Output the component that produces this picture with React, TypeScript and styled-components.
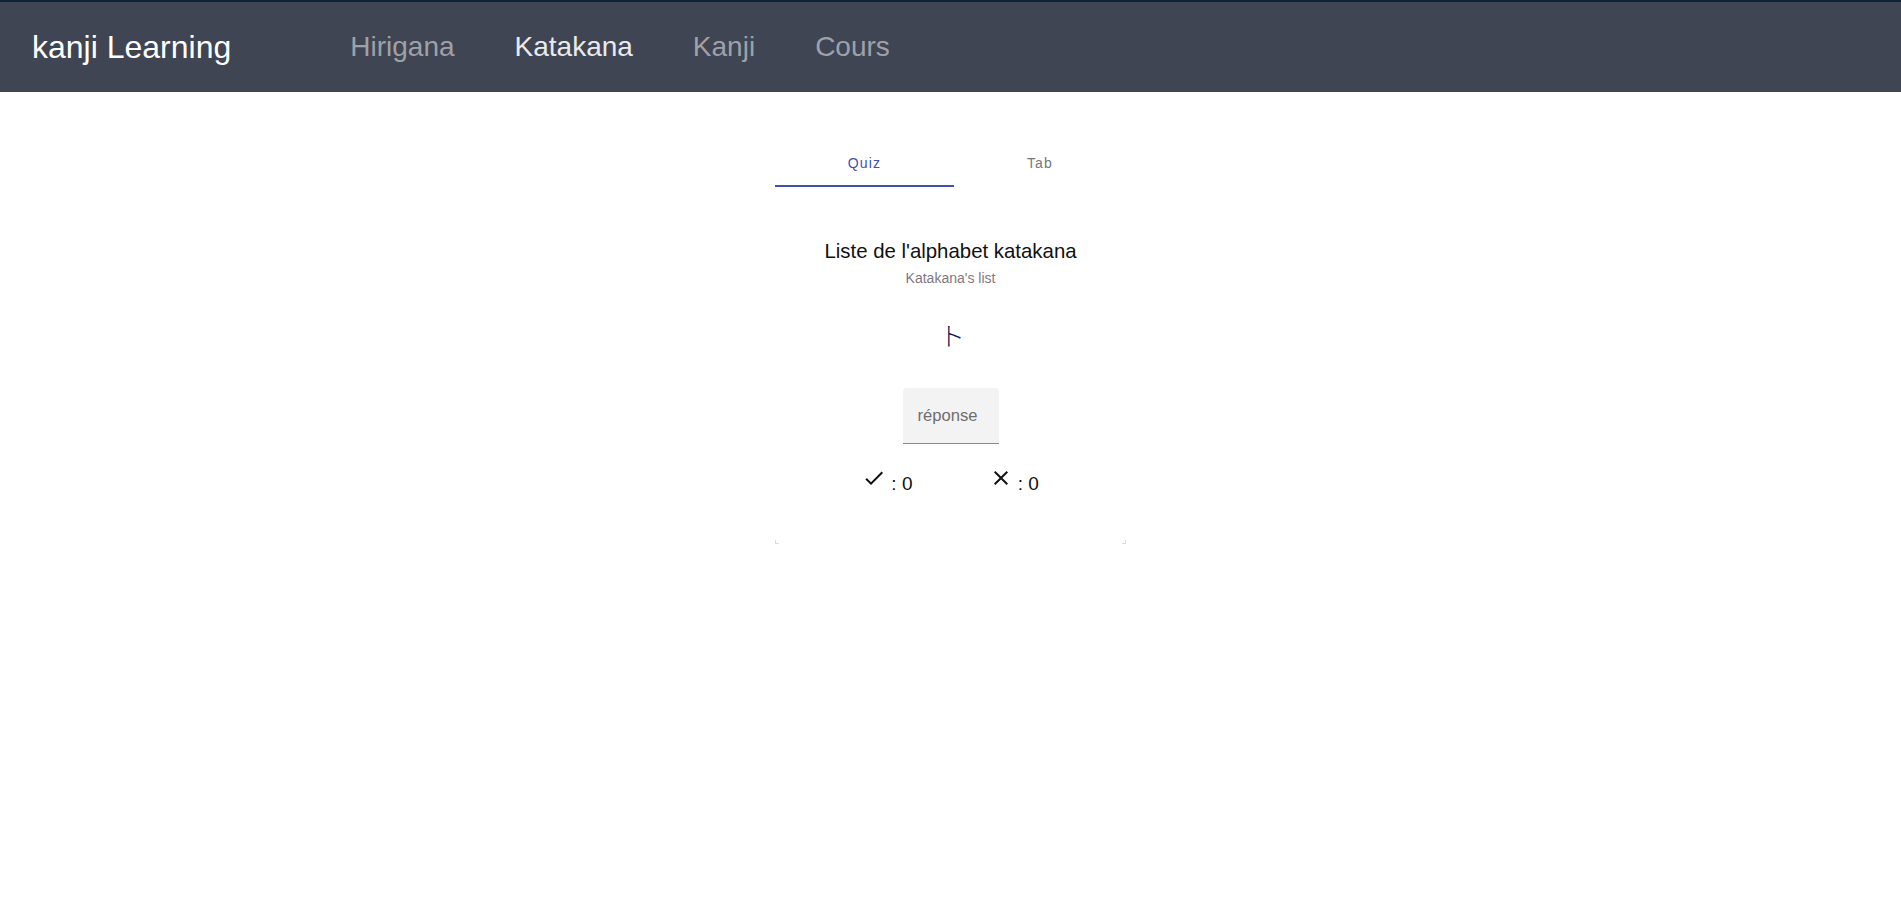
import React, { useState } from "react";
import styled, { createGlobalStyle } from "styled-components";

const GlobalStyle = createGlobalStyle`
  html, body {
    margin: 0;
    padding: 0;
    background: #ffffff;
    font-family: "Liberation Sans", Arial, sans-serif;
  }
  * { box-sizing: border-box; }
`;

const NavBar = styled.nav`
  display: flex;
  align-items: flex-start;
  height: 92px;
  padding: 25px 0 25px 32px;
  background: #3f4552;
  border-top: 2px solid #0e2235;
`;

const Brand = styled.a`
  font-size: 32px;
  line-height: 40px;
  color: #ffffff;
  text-decoration: none;
  margin-right: 89px;
  white-space: nowrap;
`;

const NavLinks = styled.div`
  display: flex;
`;

const NavLink = styled.a<{ $active?: boolean }>`
  font-size: 28px;
  line-height: 40px;
  padding: 0 30px;
  color: ${(p) => (p.$active ? "#e9eaec" : "#9ea1a8")};
  text-decoration: none;
  white-space: nowrap;
  cursor: pointer;
`;

const Main = styled.main`
  display: flex;
  flex-direction: column;
  align-items: center;
`;

const Card = styled.section`
  position: relative;
  width: 351px;
  margin-top: 47px;
  padding-bottom: 48px;
  display: flex;
  flex-direction: column;
  align-items: center;

  &::before,
  &::after {
    content: "";
    position: absolute;
    bottom: 0;
    width: 3px;
    height: 3px;
    border-bottom: 1px solid #dcdcdc;
  }
  &::before {
    left: 0;
    border-left: 1px solid #dcdcdc;
  }
  &::after {
    right: 0;
    border-right: 1px solid #dcdcdc;
  }
`;

const TabList = styled.div`
  display: grid;
  grid-template-columns: 179px 172px;
  width: 100%;
`;

const TabButton = styled.button<{ $active?: boolean }>`
  height: 48px;
  border: none;
  background: transparent;
  font-family: "Liberation Sans", Arial, sans-serif;
  font-weight: 400;
  font-size: 14px;
  letter-spacing: 1.2px;
  color: ${(p) => (p.$active ? "#3f51b5" : "#767676")};
  border-bottom: 2px solid ${(p) => (p.$active ? "#3f51b5" : "transparent")};
  padding: 2px 0 0 0;
  cursor: pointer;
`;

const Title = styled.h2`
  margin: 52px 0 0 0;
  font-size: 20.4px;
  line-height: 24px;
  font-weight: 400;
  color: #111111;
`;

const Subtitle = styled.p`
  margin: 5px 0 0 0;
  font-size: 14px;
  line-height: 20px;
  color: #81787f;
`;

const Kana = styled.div`
  margin-top: 32px;
  padding-left: 3px;
  font-family: "Noto Sans CJK JP", "Noto Sans CJK SC", sans-serif;
  font-weight: 300;
  font-size: 26px;
  line-height: 30px;
  color: #10175a;
`;

const AnswerInput = styled.input`
  margin-top: 38px;
  width: 96px;
  height: 56px;
  padding: 0 0 0 15px;
  border: none;
  border-bottom: 1px solid #8c8c8c;
  border-radius: 4px 4px 0 0;
  background: #f3f3f3;
  font-family: "Liberation Sans", Arial, sans-serif;
  font-size: 16.6px;
  color: #222;
  outline: none;

  &::placeholder {
    color: #6e6e6e;
  }
`;

const ScoreRow = styled.div`
  display: flex;
  gap: 76px;
  margin-top: 22px;
`;

const ScoreItem = styled.div`
  display: flex;
  align-items: baseline;
  font-size: 19px;
  line-height: 24px;
  color: #111111;
  white-space: pre;
`;

const Icon = styled.svg`
  width: 24px;
  height: 24px;
  fill: #111111;
  flex: none;
`;

const CheckIcon = () => (
  <Icon viewBox="0 0 24 24">
    <path d="M9 16.17L4.83 12l-1.42 1.41L9 19 21 7l-1.41-1.41z" />
  </Icon>
);

const CloseIcon = () => (
  <Icon viewBox="0 0 24 24">
    <path d="M19 6.41L17.59 5 12 10.59 6.41 5 5 6.41 10.59 12 5 17.59 6.41 19 12 13.41 17.59 19 19 17.59 13.41 12z" />
  </Icon>
);

export default function App() {
  const [tab, setTab] = useState(0);
  const [answer, setAnswer] = useState("");
  const links = ["Hirigana", "Katakana", "Kanji", "Cours"];
  return (
    <>
      <GlobalStyle />
      <NavBar>
        <Brand>kanji Learning</Brand>
        <NavLinks>
          {links.map((l) => (
            <NavLink key={l} $active={l === "Katakana"}>
              {l}
            </NavLink>
          ))}
        </NavLinks>
      </NavBar>
      <Main>
        <Card>
          <TabList>
            <TabButton $active={tab === 0} onClick={() => setTab(0)}>
              Quiz
            </TabButton>
            <TabButton $active={tab === 1} onClick={() => setTab(1)}>
              Tab
            </TabButton>
          </TabList>
          <Title>Liste de l'alphabet katakana</Title>
          <Subtitle>Katakana's list</Subtitle>
          <Kana>ト</Kana>
          <AnswerInput
            placeholder="réponse"
            value={answer}
            onChange={(e) => setAnswer(e.target.value)}
          />
          <ScoreRow>
            <ScoreItem>
              <CheckIcon />
              {" : 0"}
            </ScoreItem>
            <ScoreItem>
              <CloseIcon />
              {" : 0"}
            </ScoreItem>
          </ScoreRow>
        </Card>
      </Main>
    </>
  );
}
